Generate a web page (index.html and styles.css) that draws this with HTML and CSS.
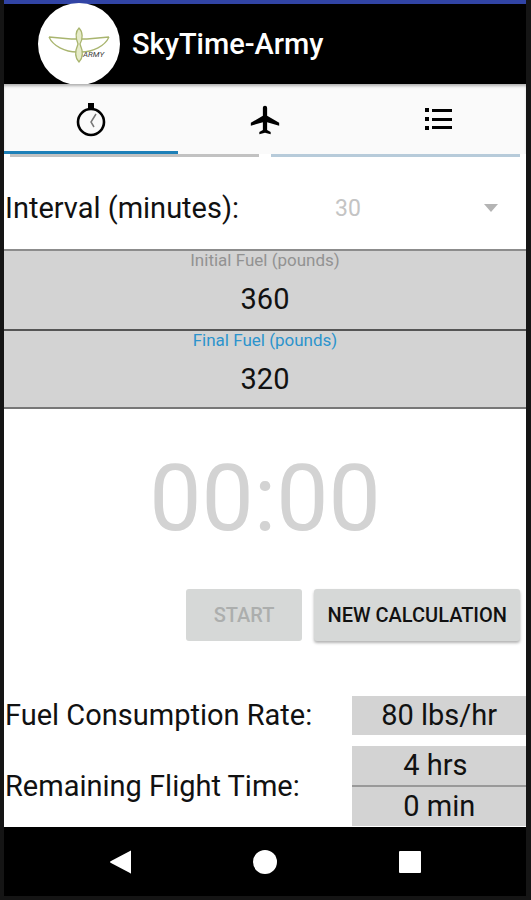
FILE: index.html
```
<!DOCTYPE html>
<html lang="en">
<head>
    <meta charset="UTF-8">
    <meta name="viewport" content="width=device-width, initial-scale=1.0">
    <link rel="stylesheet" href="styles.css">
    <title>SkyTime-Army</title>
</head>
<body>
    <header class="topo">
        <svg class="logo" viewBox="0 0 82 82" role="img" aria-label="Army">
            <circle cx="41" cy="41" r="41" fill="#fff"/>
            <g fill="none" stroke="#a9b56f" stroke-width="1.3" stroke-linejoin="round">
                <path d="M39 36H33M11 34c4 9 16 15 28 15M11 34l22 2"/>
                <path d="M43 36h6M71 34c-4 9-16 15-28 15M71 34l-22 2"/>
                <path d="M41 25c-4 4-3 11-1 16-3 7-3 14 1 18 4-4 4-11 1-18 3-5 3-12-1-16z" fill="#e6ebc9"/>
            </g>
            <text class="logo_texto" x="45" y="54">ARMY</text>
        </svg>
        <h1>SkyTime-Army</h1>
    </header>

    <nav class="abas">
        <button class="aba ativa" aria-label="Timer">
            <svg width="36" height="36" viewBox="0 0 36 36">
                <circle cx="18" cy="20" r="13" fill="none" stroke="#000" stroke-width="2.6"/>
                <path d="M15 1h6v5h-6z"/>
                <path d="M23 12l-5 8 3 5" fill="none" stroke="#777" stroke-width="1.5"/>
            </svg>
        </button>
        <button class="aba" aria-label="Flight">
            <svg width="34" height="34" viewBox="0 0 24 24">
                <path d="M22 16v-2l-8.500-5V3.500c0-.83-.67-1.500-1.500-1.500s-1.500.67-1.500 1.500V9L2 14v2l8.500-2.500V19L8 20.500V22l4-1 4 1v-1.500L13.500 19v-5.500z"/>
            </svg>
        </button>
        <button class="aba" aria-label="List">
            <svg width="36" height="36" viewBox="0 0 36 36">
                <path d="M4 6h4v4H4zM4 15h4v4H4zM4 24h4v4H4zM11 7h20v3H11zM11 16h20v3H11zM11 24h20v3H11z"/>
            </svg>
        </button>
    </nav>
    <div class="linhas">
        <span class="linha"></span>
        <span class="linha azul"></span>
    </div>

    <main class="container">
        <div class="intervalo">
            <label for="intervalo">Interval (minutes):</label>
            <div class="escolha">
                <select id="intervalo" disabled>
                    <option>30</option>
                </select>
                <svg width="14" height="8" viewBox="0 0 14 8"><path d="M0 0h14L7 8z" fill="#b4b4b4"/></svg>
            </div>
        </div>

        <div class="campo">
            <label for="inicial">Initial Fuel (pounds)</label>
            <input id="inicial" type="text" inputmode="numeric" value="360">
        </div>
        <div class="campo foco">
            <label for="final">Final Fuel (pounds)</label>
            <input id="final" type="text" inputmode="numeric" value="320">
        </div>

        <div class="relogio">00:00</div>

        <div class="botoes">
            <button class="botao" disabled>START</button>
            <button class="botao novo">NEW CALCULATION</button>
        </div>

        <div class="resultado">
            <span>Fuel Consumption Rate:</span>
            <output class="valor">80 lbs/hr</output>
        </div>
        <div class="resultado">
            <span>Remaining Flight Time:</span>
            <div class="tempo">
                <output class="valor">4 hrs</output>
                <output class="valor">0 min</output>
            </div>
        </div>
    </main>

    <footer class="sistema">
        <button aria-label="Back">
            <svg width="24" height="24" viewBox="0 0 24 24"><path d="M23 1v22q0 1-1 0L3 13q-2-1 0-2L22 1q1-1 1 0z" fill="#fff"/></svg>
        </button>
        <button aria-label="Home">
            <svg width="24" height="24" viewBox="0 0 24 24"><circle cx="12" cy="12" r="12" fill="#fff"/></svg>
        </button>
        <button aria-label="Recent apps">
            <svg width="24" height="24" viewBox="0 0 24 24"><rect x="1" y="1" width="22" height="22" rx="1" fill="#fff"/></svg>
        </button>
    </footer>
</body>
</html>
```

FILE: styles.css
```
*{
    box-sizing: border-box;
    margin: 0;
}
body{
    min-height: 100vh;
    display: flex;
    flex-direction: column;
    border: solid #151515;
    border-width: 0 5px 4px 4px;
    background: #fff;
    color: #111;
    font-family: Roboto, sans-serif;
    font-size: 29px;
    line-height: 39px;
}
button, input, select{
    font-family: inherit;
    border: none;
    outline: none;
    padding: 0;
}
button{
    cursor: pointer;
}
.topo{
    display: flex;
    align-items: center;
    gap: 12px;
    height: 84px;
    padding-left: 34px;
    border-top: solid 4px #3144a5;
    background: #000;
    color: #fff;
}
.topo h1{
    font-size: 29px;
    font-weight: 500;
}
.logo{
    width: 82px;
    height: 82px;
}
.logo_texto{
    font-size: 8px;
    font-style: italic;
    fill: #444;
}
.abas{
    display: grid;
    grid-template-columns: repeat(3, 1fr);
    height: 70px;
    background: #fafafa;
    box-shadow: inset 0 3px 3px -1px rgba(0,0,0,0.3);
}
.aba{
    display: flex;
    justify-content: center;
    align-items: center;
    padding-top: 4px;
    background: none;
    border-bottom: solid 3px transparent;
}
.ativa{
    border-color: #1d80b8;
}
.linhas{
    display: flex;
    gap: 12px;
    padding: 0 6px;
}
.linha{
    flex: 1;
    height: 3px;
    background: #c2c2c2;
}
.azul{
    background: #b7cbda;
}
.container{
    flex: 1;
}
.intervalo{
    display: grid;
    grid-template-columns: 330px 1fr;
    align-items: center;
    height: 92px;
    padding: 18px 0 8px 1px;
}
.escolha{
    display: flex;
    align-items: center;
    padding-right: 28px;
}
.escolha select{
    flex: 1;
    appearance: none;
    background: none;
    color: #c4c4c4;
    font-size: 23px;
    opacity: 1;
}
.campo{
    display: flex;
    flex-direction: column;
    height: 80px;
    border-top: solid 2px #8c8c8c;
    background: #d3d3d3;
    text-align: center;
}
.campo label{
    color: #929292;
    font-size: 17px;
    line-height: 19px;
}
.campo input{
    width: 100%;
    height: 58px;
    background: none;
    color: #111;
    font-size: 29px;
    text-align: center;
}
.foco{
    border-top-color: #555;
    border-bottom: solid 2px #777;
}
.foco label{
    color: #2c93cd;
}
.relogio{
    padding: 34px 0;
    color: #d3d3d3;
    font-size: 93px;
    line-height: 112px;
    text-align: center;
}
.botoes{
    display: flex;
    justify-content: flex-end;
    align-items: flex-start;
    gap: 12px;
    padding: 0 6px 44px;
}
.botao{
    height: 52px;
    padding: 0 28px;
    border-radius: 3px;
    background: #d6d8d7;
    color: #111;
    font-size: 20px;
    font-weight: 500;
}
.botao:disabled{
    color: #acaead;
    cursor: default;
}
.novo{
    padding: 0 13px;
    box-shadow: 0 2px 3px rgba(0,0,0,0.3);
}
.resultado{
    display: grid;
    grid-template-columns: 2fr 1fr;
    align-items: center;
    margin-top: 11px;
    padding-left: 1px;
}
.valor{
    display: block;
    background: #d3d3d3;
    text-align: center;
}
.tempo .valor{
    padding-left: 51px;
    text-align: left;
}
.tempo .valor + .valor{
    border-top: solid 2px #999;
}
.sistema{
    display: flex;
    justify-content: space-around;
    align-items: center;
    height: 69px;
    padding: 0 44px;
    background: #000;
}
.sistema button{
    display: flex;
    background: none;
}
```
